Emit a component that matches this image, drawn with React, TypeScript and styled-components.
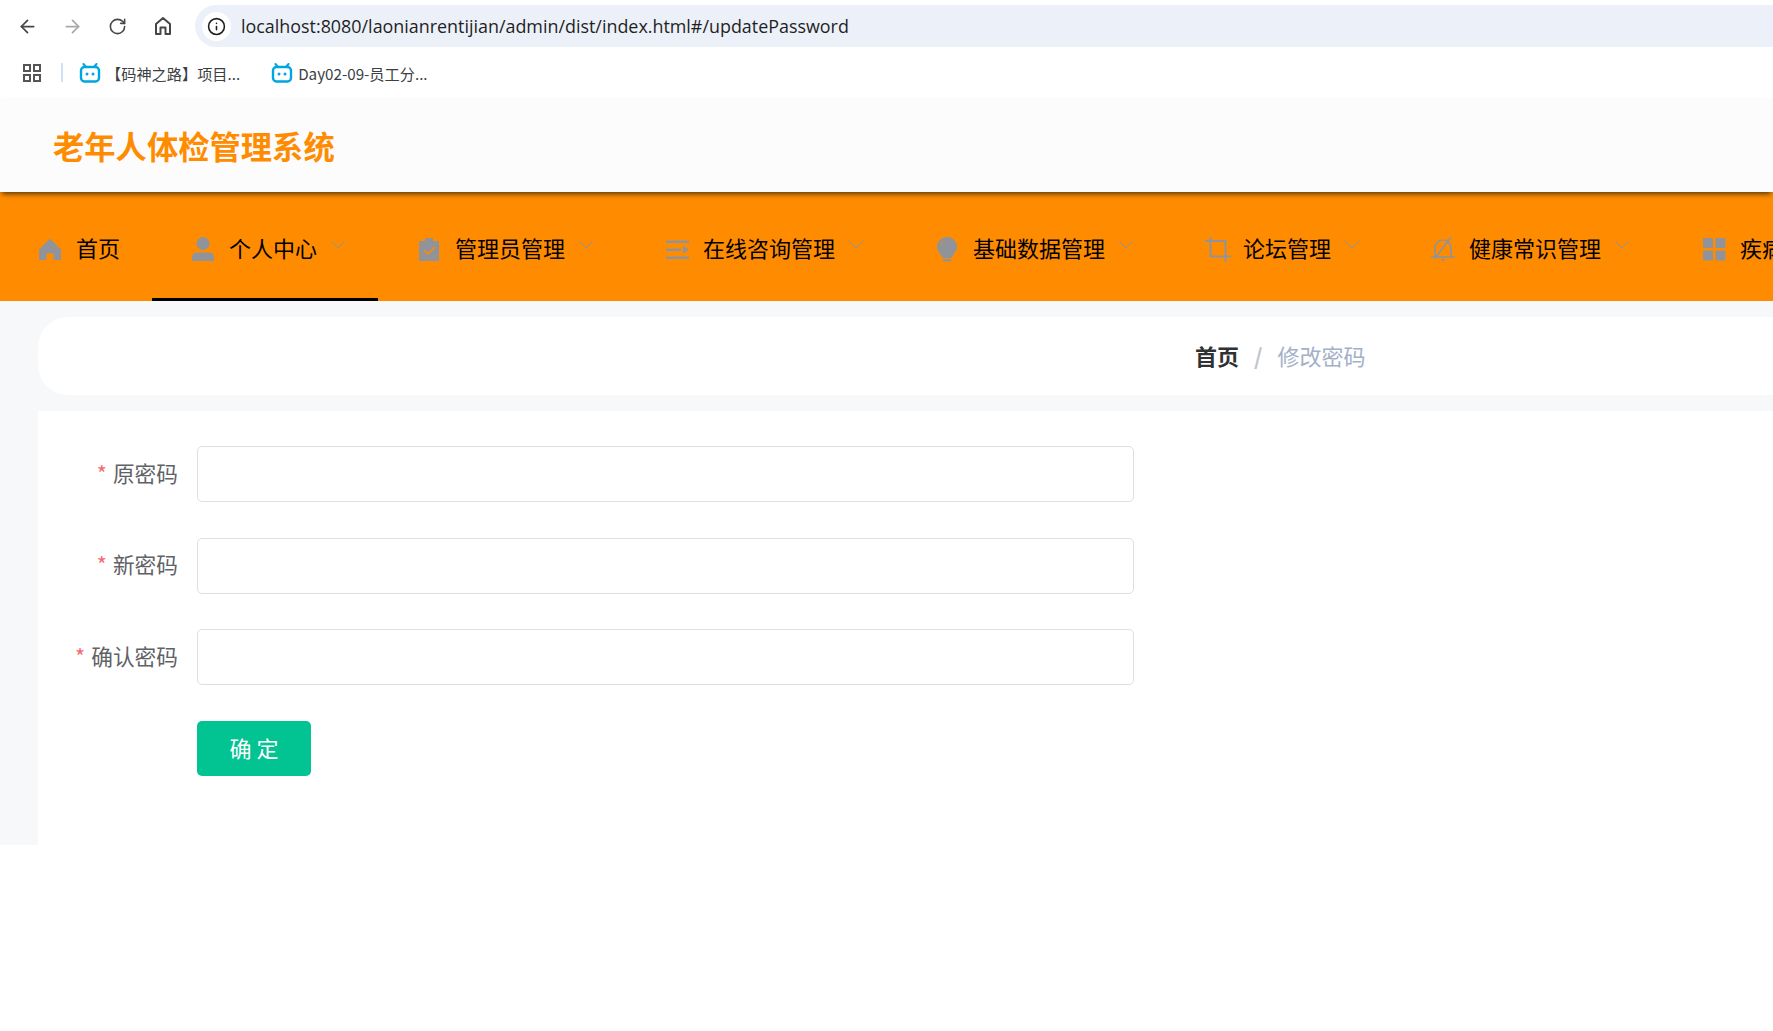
import { ReactNode } from 'react';
import styled, { createGlobalStyle } from 'styled-components';
import { ArrowLeft, ArrowRight, RotateCw, Info } from 'lucide-react';

const CJK = `"Noto Sans CJK SC", "Noto Sans", sans-serif`;

const GlobalStyle = createGlobalStyle`
  html, body {
    margin: 0;
    padding: 0;
    background: #fff;
    overflow: hidden;
  }
  body {
    font-family: ${CJK};
  }
`;

const Page = styled.div`
  width: 1773px;
  overflow: hidden;
`;

const Toolbar = styled.div`
  display: flex;
  align-items: center;
  height: 42px;
  padding: 5px 0 0 5px;
`;

const ToolButton = styled.div<{ $muted?: boolean }>`
  width: 45px;
  height: 42px;
  display: flex;
  align-items: center;
  justify-content: center;
  color: ${(p) => (p.$muted ? '#a9a9a9' : '#444746')};
`;

const AddressBar = styled.div`
  flex: 1;
  height: 42px;
  margin-left: 10px;
  padding-left: 7px;
  display: flex;
  align-items: center;
  gap: 10px;
  background: #ebf0f9;
  border-radius: 21px 0 0 21px;
`;

const InfoChip = styled.div`
  width: 29px;
  height: 29px;
  border-radius: 50%;
  background: #fff;
  color: #1f1f1f;
  display: flex;
  align-items: center;
  justify-content: center;
`;

const Url = styled.span`
  padding-bottom: 1px;
  font-family: "Open Sans", sans-serif;
  font-size: 17.9px;
  color: #1f1f1f;
  white-space: nowrap;
`;

const Bookmarks = styled.div`
  height: 51px;
  display: flex;
  align-items: center;
  padding-left: 23px;
  font-size: 15.2px;
  color: #3c4043;
`;

const BookmarkDivider = styled.div`
  width: 2px;
  height: 19px;
  margin: 0 16px 0 20px;
  background: #cfe0fa;
`;

const Bookmark = styled.div`
  display: flex;
  align-items: center;
  gap: 5px;
  margin-right: 31px;
  white-space: nowrap;
`;

const SiteHeader = styled.header`
  position: relative;
  z-index: 1;
  height: 94px;
  padding-left: 53px;
  display: flex;
  align-items: center;
  background: #fcfcfd;
  box-shadow: 0 4px 5px -2px rgba(60, 40, 10, 0.85);
`;

const SiteTitle = styled.h1`
  margin: 0;
  font-size: 31.3px;
  font-weight: 700;
  color: #ff8c00;
`;

const Nav = styled.nav`
  height: 109px;
  display: flex;
  background: #ff8c00;
`;

const NavItem = styled.div<{ $width: number; $active?: boolean; $pad?: number }>`
  flex: none;
  box-sizing: border-box;
  width: ${(p) => p.$width}px;
  padding: 4px 0 0 ${(p) => p.$pad ?? 39}px;
  display: flex;
  align-items: center;
  font-size: 22px;
  color: #000;
  white-space: nowrap;
  border-bottom: 3px solid ${(p) => (p.$active ? '#000' : 'transparent')};
`;

const NavIcon = styled.svg`
  flex: none;
  width: 26px;
  height: 26px;
  margin: 5px 12px 0 0;
  color: #909399;
`;

const Chevron = styled.svg`
  flex: none;
  width: 16px;
  height: 9px;
  margin: 0 0 6px 13px;
  color: #909399;
`;

const Content = styled.main`
  padding: 16px 0 0 38px;
  background: #f6f8fa;
`;

const Crumbs = styled.div`
  height: 78px;
  margin-bottom: 16px;
  padding: 0 0 3px 1157px;
  box-sizing: border-box;
  display: flex;
  align-items: center;
  font-size: 22px;
  background: #fff;
  border-radius: 30px 0 0 30px;
`;

const CrumbHome = styled.span`
  font-weight: 700;
  color: #303133;
`;

const CrumbSep = styled.span`
  margin: 0 15px;
  font-weight: 700;
  color: #c0c4cc;
`;

const CrumbCurrent = styled.span`
  color: #a3b0c8;
`;

const FormCard = styled.form`
  padding: 35px 0 69px;
  display: flex;
  flex-direction: column;
  gap: 35.6px;
  background: #fff;
`;

const FormRow = styled.div`
  display: flex;
  align-items: center;
`;

const Label = styled.label`
  box-sizing: border-box;
  width: 140px;
  margin-right: 19px;
  padding-bottom: 4px;
  display: flex;
  justify-content: flex-end;
  font-size: 21.7px;
  color: #606266;
  &::before {
    content: '*';
    margin-right: 6px;
    color: #f56c6c;
  }
`;

const Input = styled.input`
  box-sizing: border-box;
  width: 937px;
  height: 56px;
  border: 1px solid #dcdfe6;
  border-radius: 5px;
  background: #fff;
  outline: none;
`;

const SubmitButton = styled.button`
  width: 114px;
  height: 55px;
  margin-left: 159px;
  padding: 0 0 3px;
  border: none;
  border-radius: 5px;
  background: #02c392;
  color: #fff;
  font-family: ${CJK};
  font-size: 22px;
`;

function BiliIcon() {
  return (
    <svg width="22" height="20" viewBox="0 0 22 20" fill="none">
      <path d="M7 4 4.500 1M15 4l2.500-3" stroke="#00a6de" strokeWidth="2" strokeLinecap="round" />
      <rect x="2" y="4" width="18" height="14.500" rx="3.500" stroke="#00a6de" strokeWidth="2.400" />
      <circle cx="8" cy="11" r="1.500" fill="#00a6de" />
      <circle cx="14" cy="11" r="1.500" fill="#00a6de" />
    </svg>
  );
}

function AppsIcon() {
  return (
    <svg width="18" height="18" viewBox="0 0 18 18" fill="none" stroke="#555" strokeWidth="2">
      <rect x="1" y="1" width="6" height="6" />
      <rect x="11" y="1" width="6" height="6" />
      <rect x="1" y="11" width="6" height="6" />
      <rect x="11" y="11" width="6" height="6" />
    </svg>
  );
}

function HomeOutline() {
  return (
    <svg width="20" height="20" viewBox="0 0 20 20" fill="none" stroke="#444746" strokeWidth="2">
      <path d="M3 18V8l7-6 7 6v10h-4.500v-6.500h-5V18z" strokeLinejoin="round" />
    </svg>
  );
}

const icons: Record<string, ReactNode> = {
  home: <path fill="currentColor" d="M12 1.500 23 12.500V23H15.500V16.500H8.500V23H1V12.500z" />,
  user: (
    <>
      <ellipse fill="currentColor" cx="12" cy="6.500" rx="6.500" ry="6.500" />
      <path fill="currentColor" d="M1 24v-3.500C1 17 3.500 15.500 6 15.500h12c2.500 0 5 1.500 5 5V24z" />
    </>
  ),
  clipboard: (
    <>
      <path fill="currentColor" d="M8 1h8v3h-8zM2 4h20v20H2z" />
      <path fill="none" stroke="#ff8c00" strokeWidth="1.600" d="M7 13l4 4 7-7" />
    </>
  ),
  list: (
    <>
      <path fill="currentColor" d="M1 3.500h23v2.500H1zM1 11.500h15v2.500H1zM1 19.500h23V22H1z" />
      <path fill="currentColor" d="M18 8.500l6 4.300-6 4.300z" />
    </>
  ),
  bulb: (
    <>
      <path fill="currentColor" d="M12 0c6 0 10 4.500 10 9.500 0 4-2.500 6.500-4.500 9.500-.5.800-.8 1.500-1 2h-9c-.2-.5-.5-1.200-1-2C4.500 16 2 13.500 2 9.500 2 4.500 6 0 12 0zM8 22h8v2.500H8z" />
      <path fill="none" stroke="#ff8c00" strokeWidth="1" opacity="0.6" d="M6 9c0-2.500 1.500-4.500 4-5" />
    </>
  ),
  crop: <path fill="none" stroke="currentColor" strokeWidth="2" d="M5.500 0v19.500H26M0 4h20.500v21" />,
  bellOff: (
    <>
      <path fill="none" stroke="currentColor" strokeWidth="1.700" d="M0 20h24M4 20v-9c0-4.500 3.500-8 8-8s8 3.500 8 8v9M3.500 22 20 0" />
      <path fill="currentColor" d="M9.500 22h5L12 25z" />
    </>
  ),
  grid: <path fill="currentColor" d="M1 1h10v10H1zM13.500 1h10v10h-10zM1 13.500h10v10H1zM13.500 13.500h10v10h-10z" />,
};

const navItems = [
  { label: '首页', icon: 'home', width: 152, pad: 38, plain: true },
  { label: '个人中心', icon: 'user', width: 226, active: true },
  { label: '管理员管理', icon: 'clipboard', width: 248 },
  { label: '在线咨询管理', icon: 'list', width: 270 },
  { label: '基础数据管理', icon: 'bulb', width: 270 },
  { label: '论坛管理', icon: 'crop', width: 226 },
  { label: '健康常识管理', icon: 'bellOff', width: 271 },
  { label: '疾病管理', icon: 'grid', width: 226 },
];

const fields = ['原密码', '新密码', '确认密码'];

export default function App() {
  return (
    <Page>
      <GlobalStyle />
      <Toolbar>
        <ToolButton><ArrowLeft size={21} strokeWidth={2} /></ToolButton>
        <ToolButton $muted><ArrowRight size={21} strokeWidth={2} /></ToolButton>
        <ToolButton><RotateCw size={19} strokeWidth={2} /></ToolButton>
        <ToolButton><HomeOutline /></ToolButton>
        <AddressBar>
          <InfoChip><Info size={19} strokeWidth={2} /></InfoChip>
          <Url>localhost:8080/laonianrentijian/admin/dist/index.html#/updatePassword</Url>
        </AddressBar>
      </Toolbar>
      <Bookmarks>
        <AppsIcon />
        <BookmarkDivider />
        <Bookmark><BiliIcon />【码神之路】项目...</Bookmark>
        <Bookmark><BiliIcon />Day02-09-员工分...</Bookmark>
      </Bookmarks>

      <SiteHeader>
        <SiteTitle>老年人体检管理系统</SiteTitle>
      </SiteHeader>

      <Nav>
        {navItems.map((item) => (
          <NavItem key={item.label} $width={item.width} $active={item.active} $pad={item.pad}>
            <NavIcon viewBox="0 0 26 26">{icons[item.icon]}</NavIcon>
            {item.label}
            {!item.plain && (
              <Chevron viewBox="0 0 16 9" fill="none" stroke="currentColor" strokeWidth="1">
                <path d="M1 1l7 7 7-7" />
              </Chevron>
            )}
          </NavItem>
        ))}
      </Nav>

      <Content>
        <Crumbs>
          <CrumbHome>首页</CrumbHome>
          <CrumbSep>/</CrumbSep>
          <CrumbCurrent>修改密码</CrumbCurrent>
        </Crumbs>
        <FormCard>
          {fields.map((name) => (
            <FormRow key={name}>
              <Label>{name}</Label>
              <Input type="password" />
            </FormRow>
          ))}
          <SubmitButton type="button">确 定</SubmitButton>
        </FormCard>
      </Content>
    </Page>
  );
}
